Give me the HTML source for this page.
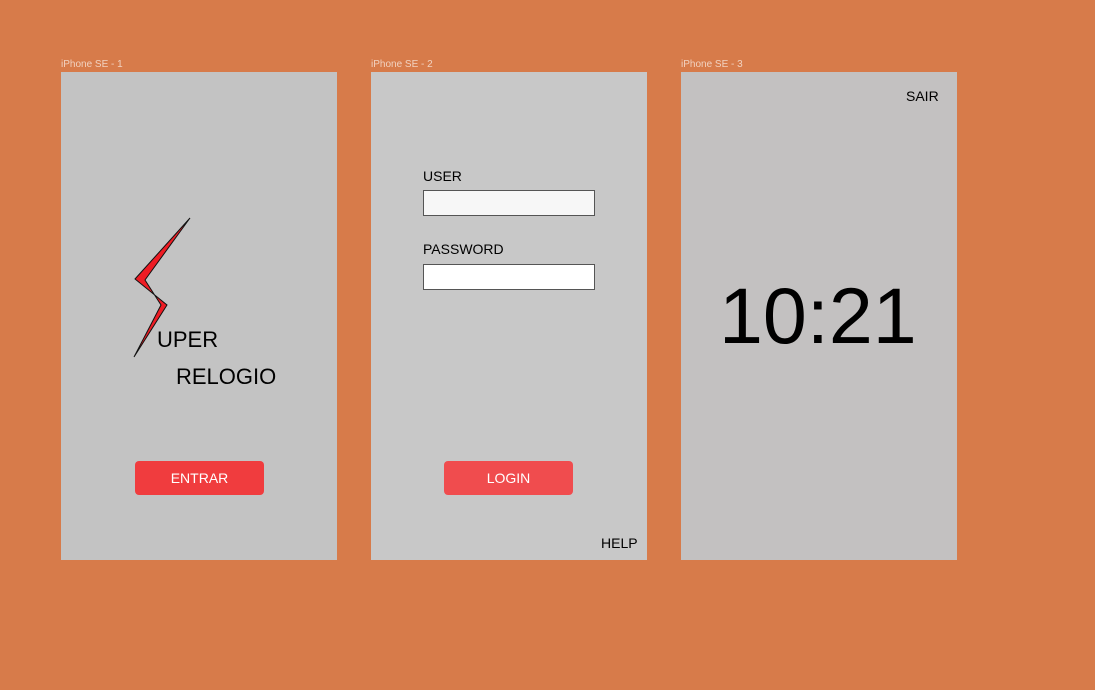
<!DOCTYPE html>
<html><head><style>
body{margin:0;width:1095px;height:690px;background:#d77b4a;position:relative;overflow:hidden;font-family:"Liberation Sans",sans-serif}
.lbl{position:absolute;top:59px;font-size:10px;color:#f1d2c0}
.f{position:absolute;top:72px;width:276px;height:488px}
.a{position:absolute;font-size:14px;color:#000}
.btn{position:absolute;width:129px;height:34px;border-radius:4px;color:#fff;font-size:14px;text-align:center;line-height:34px}
.in{position:absolute;left:52px;width:170px;height:24px;border:1px solid #555}
</style></head><body>
<div class="lbl" style="left:61px">iPhone SE - 1</div>
<div class="lbl" style="left:371px">iPhone SE - 2</div>
<div class="lbl" style="left:681px">iPhone SE - 3</div>
<div class="f" style="left:61px;background:#c3c3c3">
<svg width="276" height="488" style="position:absolute;left:0;top:0"><polygon points="129,146 74,207 106,233 73,285 100,233 84,208" fill="#ee1c24" stroke="#111" stroke-width="1"/></svg>
<div class="a" style="left:96px;top:255px;font-size:22px">UPER</div>
<div class="a" style="left:115px;top:292px;font-size:22px">RELOGIO</div>
<div class="btn" style="left:74px;top:389px;background:#f03c3e">ENTRAR</div>
</div>
<div class="f" style="left:371px;background:#c8c8c8">
<div class="a" style="left:52px;top:96px">USER</div>
<div class="in" style="top:118px;background:#f7f7f7"></div>
<div class="a" style="left:52px;top:169px">PASSWORD</div>
<div class="in" style="top:192px;background:#fff"></div>
<div class="btn" style="left:73px;top:389px;background:#f04c4e">LOGIN</div>
<div class="a" style="left:230px;top:463px">HELP</div>
</div>
<div class="f" style="left:681px;background:#c3c1c1">
<div class="a" style="left:225px;top:16px">SAIR</div>
<div class="a" style="left:38px;top:199px;font-size:79px;line-height:90px">10:21</div>
</div>
</body></html>
